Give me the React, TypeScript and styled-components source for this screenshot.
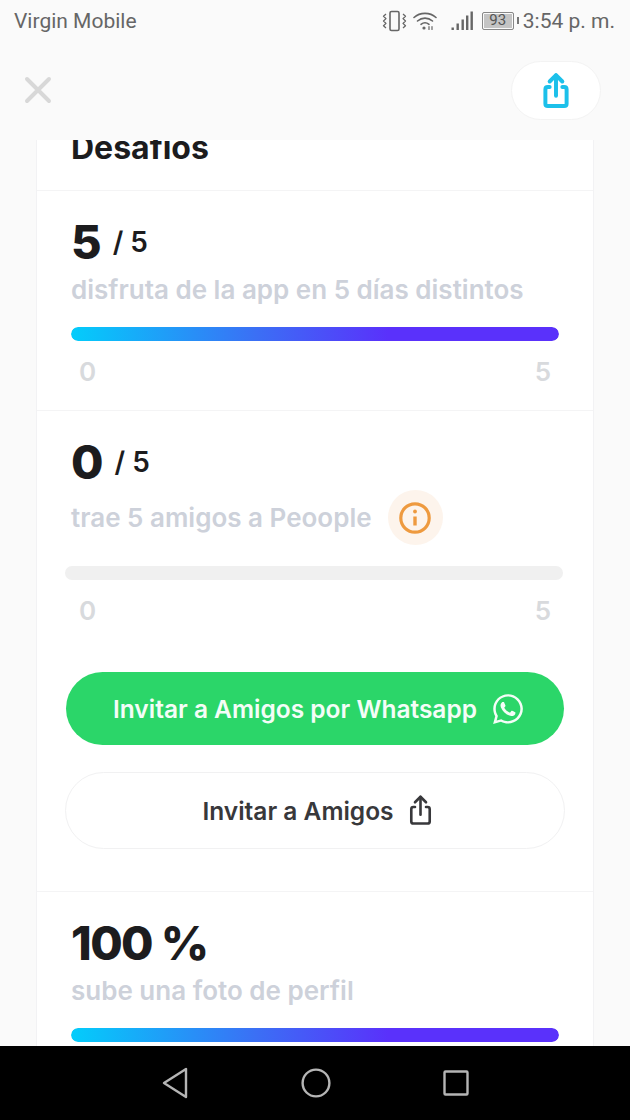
import React from "react";
import styled, { createGlobalStyle } from "styled-components";
import { FaWhatsapp } from "react-icons/fa";

const Global = createGlobalStyle`
  html, body { margin: 0; padding: 0; background: #fafafa; }
  * { box-sizing: border-box; }
`;

const Screen = styled.div`
  width: 630px;
  height: 1120px;
  display: flex;
  flex-direction: column;
  overflow: hidden;
  background: #fafafa;
  font-family: "Inter", "Lato", sans-serif;
`;

const StatusBar = styled.div`
  height: 42px;
  flex: none;
  display: flex;
  align-items: center;
  justify-content: space-between;
  padding: 0 15px 0 14px;
  font-family: "Roboto", sans-serif;
  font-size: 21px;
  color: #666;
`;

const StatusRight = styled.div`
  display: flex;
  align-items: center;
`;

const Clock = styled.span`
  margin-left: 9px;
  white-space: pre;
`;

const Battery = styled.div`
  width: 32px;
  height: 18px;
  border: 1.5px solid #888;
  border-radius: 2px;
  margin-left: 8px;
  background: #c4c4c4;
  box-shadow: inset 0 0 0 1px #fafafa;
  font-size: 15px;
  line-height: 15px;
  text-align: center;
  color: #555;
  position: relative;
  &::after {
    content: "";
    position: absolute;
    right: -6px;
    top: 4px;
    width: 2px;
    height: 7px;
    background: #777;
  }
`;

const Header = styled.div`
  height: 98px;
  flex: none;
  display: flex;
  align-items: flex-start;
  justify-content: space-between;
  padding: 19px 29px 0 24px;
`;

const CloseButton = styled.div`
  width: 28px;
  height: 28px;
  margin-top: 15px;
  display: flex;
`;

const ShareButton = styled.div`
  width: 90px;
  height: 59px;
  border-radius: 30px;
  background: #fff;
  border: 1px solid #f3f3f3;
  display: flex;
  align-items: center;
  justify-content: center;
`;

const Scroll = styled.div`
  flex: 1;
  min-height: 0;
  overflow: hidden;
  padding: 0 36px;
`;

const Card = styled.div`
  background: #fff;
  border-left: 1.5px solid #f2f2f4;
  border-right: 1.5px solid #f2f2f4;
`;

const Section = styled.div`
  border-bottom: 1.5px solid #f4f4f5;
  padding: 0 34px;
`;

const TitleSection = styled(Section)`
  height: 51px;
  overflow: hidden;
`;

const Title = styled.h1`
  margin: -13px 0 0;
  font-size: 32px;
  line-height: 42px;
  font-weight: 700;
  color: #1c1c1e;
`;

const ChallengeSection = styled(Section)<{ $height: number }>`
  height: ${(p) => p.$height}px;
  padding-top: 19px;
`;

const Score = styled.div`
  display: flex;
  align-items: center;
  height: 60px;
  padding-top: 4px;
  line-height: 56px;
  color: #1c1c1e;
`;

const BigNumber = styled.span<{ $tight?: boolean }>`
  font-size: 47px;
  font-weight: 800;
  letter-spacing: ${(p) => (p.$tight ? "-1.6px" : "0")};
`;

const Fraction = styled.span`
  font-size: 28px;
  font-weight: 600;
  margin-left: 11px;
  white-space: pre;
`;

const Description = styled.div<{ $tall?: boolean }>`
  display: flex;
  align-items: center;
  height: ${(p) => (p.$tall ? 55 : 38)}px;
  font-size: 26px;
  font-weight: 600;
  color: #cdd1da;
  white-space: nowrap;
`;

const InfoBadge = styled.div`
  width: 55px;
  height: 55px;
  border-radius: 50%;
  background: #fdf4ec;
  margin-left: 16px;
  flex: none;
  display: flex;
  align-items: center;
  justify-content: center;
`;

const Track = styled.div<{ $wide?: boolean; $top: number }>`
  height: 14px;
  margin: ${(p) => p.$top}px ${(p) => (p.$wide ? "-4px" : "0")} 0 ${(p) => (p.$wide ? "-6px" : "0")};
  border-radius: 7px;
  background: #f0f0f0;
  overflow: hidden;
`;

const Fill = styled.div`
  height: 100%;
  border-radius: 7px;
  background: linear-gradient(90deg, #03cdfb 0%, #3b6ff5 38%, #5a31fb 65%, #5a31fb 100%);
`;

const Scale = styled.div`
  display: flex;
  justify-content: space-between;
  margin: 14px 8px 0;
  height: 34px;
  line-height: 34px;
  font-size: 26px;
  font-weight: 600;
  color: #d8dadd;
`;

const ButtonStack = styled.div`
  display: flex;
  flex-direction: column;
  margin: 44px -6px 0 -6px;
`;

const PrimaryButton = styled.div`
  height: 73px;
  margin: 0 1px;
  padding-left: 8px;
  border-radius: 37px;
  background: #2bd669;
  color: #f4fdf7;
  display: flex;
  align-items: center;
  justify-content: center;
  gap: 14px;
  font-size: 24.5px;
  font-weight: 600;
`;

const SecondaryButton = styled.div`
  height: 77px;
  margin-top: 27px;
  padding-left: 9px;
  border-radius: 39px;
  background: #fff;
  border: 1.5px solid #f1f1f2;
  color: #38383b;
  display: flex;
  align-items: center;
  justify-content: center;
  gap: 10px;
  font-size: 24.5px;
  font-weight: 600;
`;

const NavBar = styled.div`
  height: 74px;
  flex: none;
  background: #000;
  display: flex;
  align-items: center;
  justify-content: center;
  gap: 112px;
`;

const ShareGlyph = ({ size, color, width }: { size: number; color: string; width: number }) => (
  <svg width={size} height={size} viewBox="0 0 24 24" fill="none" stroke={color} strokeWidth={width} strokeLinecap="round" strokeLinejoin="round">
    <path d="M8 9.5H6.8c-.9 0-1.5.6-1.5 1.5v9c0 .9.6 1.5 1.5 1.5h10.4c.9 0 1.5-.6 1.5-1.5v-9c0-.9-.6-1.5-1.5-1.5H16" />
    <path d="M12 15V2.2" />
    <path d="M8 6l4-4 4 4" />
  </svg>
);

const Vibrate = () => (
  <svg width="25" height="22" viewBox="0 0 25 22" fill="none" stroke="#666" strokeWidth="1.6" strokeLinejoin="round" style={{ marginRight: 6 }}>
    <rect x="8" y="1.5" width="9" height="19" rx="1.5" />
    <path d="M4 4l-2.5 2.2L4 8.6 1.5 11 4 13.4l-2.5 2.4L4 18" strokeWidth="1.3" />
    <path d="M21 4l2.5 2.2L21 8.6l2.5 2.4-2.5 2.4 2.5 2.4L21 18" strokeWidth="1.3" />
  </svg>
);

const Wifi = () => (
  <svg width="24" height="20" viewBox="0 0 24 20" fill="none" stroke="#666" strokeWidth="1.6" strokeLinecap="round">
    <path d="M1 6.5C7 1 17 1 23 6.5" />
    <path d="M4.5 10c4.5-3.8 10.5-3.8 15 0" />
    <path d="M8 13.3c2.5-2 5.5-2 8 0" />
    <circle cx="11" cy="17" r="1.6" fill="#666" stroke="none" />
    <path d="M16 15.5v3M19 15.5v3" strokeWidth="1.2" />
  </svg>
);

const Signal = () => (
  <svg width="23" height="20" viewBox="0 0 22 20" fill="#666" style={{ marginLeft: 14 }}>
    <rect x="0" y="16.5" width="2.4" height="2.5" />
    <rect x="5" y="12.5" width="2.4" height="6.5" />
    <rect x="10" y="8.5" width="2.4" height="10.5" />
    <rect x="14.5" y="4.5" width="2.4" height="14.5" />
    <rect x="19" y="0.5" width="2.4" height="18.5" />
  </svg>
);

const Challenge = ({
  score,
  fraction,
  label,
  info,
  filled,
  height,
  children,
}: {
  score: string;
  fraction: string;
  label: string;
  info?: boolean;
  filled?: boolean;
  height: number;
  children?: React.ReactNode;
}) => (
  <ChallengeSection $height={height}>
    <Score>
      <BigNumber>{score}</BigNumber>
      <Fraction>{fraction}</Fraction>
    </Score>
    <Description $tall={info}>
      {label}
      {info && (
        <InfoBadge>
          <svg width="34" height="34" viewBox="0 0 34 34" fill="none" stroke="#ee9a3f" strokeWidth="3.2">
            <circle cx="17" cy="17" r="14.2" />
            <path d="M17 15.5v9" strokeWidth="3.4" />
            <circle cx="17" cy="10.5" r="1.9" fill="#ee9a3f" stroke="none" />
          </svg>
        </InfoBadge>
      )}
    </Description>
    <Track $wide={!filled} $top={info ? 21 : 19}>
      {filled && <Fill />}
    </Track>
    <Scale>
      <span>0</span>
      <span>5</span>
    </Scale>
    {children}
  </ChallengeSection>
);

export default function App() {
  return (
    <Screen>
      <Global />
      <StatusBar>
        <span>Virgin Mobile</span>
        <StatusRight>
          <Vibrate />
          <Wifi />
          <Signal />
          <Battery>93</Battery>
          <Clock>3:54 p. m.</Clock>
        </StatusRight>
      </StatusBar>
      <Header>
        <CloseButton>
          <svg width="28" height="28" viewBox="0 0 28 28" stroke="#d8d8d8" strokeWidth="4" strokeLinecap="round">
            <path d="M3 3l22 22M25 3L3 25" />
          </svg>
        </CloseButton>
        <ShareButton>
          <ShareGlyph size={38} color="#1cc0ea" width={2.5} />
        </ShareButton>
      </Header>
      <Scroll>
        <Card>
          <TitleSection>
            <Title>Desafios</Title>
          </TitleSection>
          <Challenge score="5" fraction="/ 5" label="disfruta de la app en 5 días distintos" filled height={220} />
          <Challenge score="0" fraction="/ 5" label="trae 5 amigos a Peoople" info height={481}>
            <ButtonStack>
              <PrimaryButton>
                Invitar a Amigos por Whatsapp
                <FaWhatsapp size={34} color="#f4fdf7" />
              </PrimaryButton>
              <SecondaryButton>
                Invitar a Amigos
                <ShareGlyph size={33} color="#38383b" width={1.9} />
              </SecondaryButton>
            </ButtonStack>
          </Challenge>
          <ChallengeSection $height={300}>
            <Score>
              <BigNumber $tight>100 %</BigNumber>
            </Score>
            <Description>sube una foto de perfil</Description>
            <Track $top={19}>
              <Fill />
            </Track>
          </ChallengeSection>
        </Card>
      </Scroll>
      <NavBar>
        <svg width="28" height="32" viewBox="0 0 28 32" fill="none" stroke="#b5b5b5" strokeWidth="2.4" strokeLinejoin="round">
          <path d="M25 2v28L3 16z" />
        </svg>
        <svg width="30" height="30" viewBox="0 0 30 30" fill="none" stroke="#b5b5b5" strokeWidth="2.4">
          <circle cx="15" cy="15" r="13.4" />
        </svg>
        <svg width="26" height="26" viewBox="0 0 26 26" fill="none" stroke="#b5b5b5" strokeWidth="2.4" strokeLinejoin="round">
          <rect x="1.5" y="1.5" width="23" height="23" rx="1" />
        </svg>
      </NavBar>
    </Screen>
  );
}
